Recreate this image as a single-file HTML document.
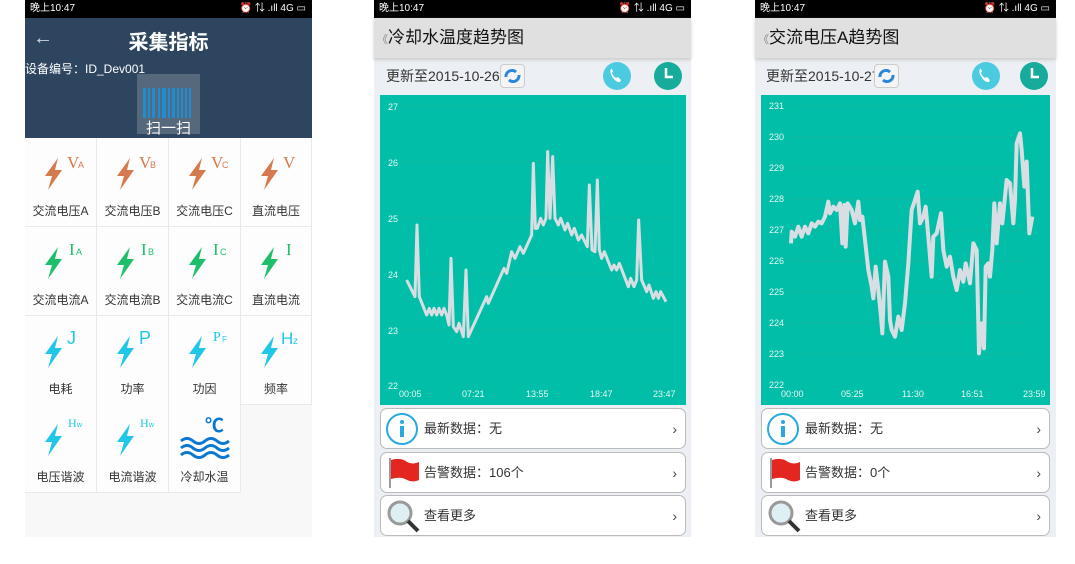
<!DOCTYPE html>
<html><head><meta charset="utf-8"><style>
*{margin:0;padding:0;box-sizing:border-box}
body{width:1075px;height:564px;background:#fff;position:relative;overflow:hidden;font-family:"Liberation Sans","Noto Sans CJK SC",sans-serif}
.abs{position:absolute}
.sb{position:absolute;top:0;height:18px;background:#000;color:#fff;font-size:10px;line-height:18px;padding-left:5px}
.sb span{position:absolute;right:6px;top:0}
.cell{position:absolute;width:72px;height:89px;border-right:1px solid #e6e9ee;border-bottom:1px solid #e6e9ee;background:#fdfdfd}
.cell .t{position:absolute;left:0;right:0;top:64px;text-align:center;font-size:12px;color:#333}
.cell svg{position:absolute;left:0;top:0}
.tb{position:absolute;top:18px;height:40px;background:#e0e0e0;font-size:17px;color:#111;line-height:40px;box-shadow:0 2px 3px #ccc;padding-left:3px}
.upd{position:absolute;top:64px;font-size:14px;color:#333;line-height:24px}
.card{position:absolute;height:41px;background:#fff;border:1px solid #bbb;border-radius:7px;font-size:13px;color:#333;line-height:40px}
.card .tx{position:absolute;left:43px}
.card .ar{position:absolute;right:8px;top:0;font-size:14px;color:#444}
</style></head><body>

<!-- Phone 1 -->
<div class="abs" style="left:25px;top:0;width:287px;height:537px;background:#f8f8f8"></div>
<div class="sb" style="left:25px;width:287px">晚上10:47<span>⏰ ⇅ .ıll 4G ▭</span></div>
<div class="abs" style="left:25px;top:18px;width:287px;height:120px;background:#2e4560"></div>
<div class="abs" style="left:33px;top:27px;color:#cfd6de;font-size:20px">←</div>
<div class="abs" style="left:25px;top:26px;width:287px;text-align:center;color:#fff;font-size:20px;font-weight:bold">采集指标</div>
<div class="abs" style="left:25px;top:60px;color:#fff;font-size:12px">设备编号：ID_Dev001</div>
<div class="abs" style="left:137px;top:74px;width:63px;height:60px;background:#56687c"></div>
<svg class="abs" style="left:141px;top:88px" width="54" height="32">
<g fill="#1c8ed4"><rect x="2" y="0" width="3" height="30"/><rect x="7" y="0" width="2" height="30"/><rect x="11" y="0" width="3" height="30"/><rect x="17" y="0" width="2" height="30"/><rect x="21" y="0" width="4" height="30"/><rect x="27" y="0" width="2" height="30"/><rect x="31" y="0" width="3" height="30"/><rect x="36" y="0" width="2" height="30"/><rect x="40" y="0" width="2" height="30"/><rect x="44" y="0" width="2" height="30"/><rect x="48" y="0" width="2" height="30"/></g></svg>
<div class="abs" style="left:137px;top:117px;width:63px;text-align:center;color:#fff;font-size:15px">扫一扫</div>

<div class="cell" style="left:25px;top:138px"><svg width="72" height="60"><path d="M33,20 L20,38 L27,38 L23,52 L37,32 L30,32 Z" fill="#d47a4e"/><text x="42" y="30" fill="#d47a4e" font-size="17" font-family="Liberation Serif">V</text><text x="53" y="30" fill="#d47a4e" font-size="9">A</text></svg><div class="t">交流电压A</div></div>
<div class="cell" style="left:97px;top:138px"><svg width="72" height="60"><path d="M33,20 L20,38 L27,38 L23,52 L37,32 L30,32 Z" fill="#d47a4e"/><text x="42" y="30" fill="#d47a4e" font-size="17" font-family="Liberation Serif">V</text><text x="53" y="30" fill="#d47a4e" font-size="9">B</text></svg><div class="t">交流电压B</div></div>
<div class="cell" style="left:169px;top:138px"><svg width="72" height="60"><path d="M33,20 L20,38 L27,38 L23,52 L37,32 L30,32 Z" fill="#d47a4e"/><text x="42" y="30" fill="#d47a4e" font-size="17" font-family="Liberation Serif">V</text><text x="53" y="30" fill="#d47a4e" font-size="9">C</text></svg><div class="t">交流电压C</div></div>
<div class="cell" style="left:241px;top:138px;width:71px"><svg width="72" height="60"><path d="M33,20 L20,38 L27,38 L23,52 L37,32 L30,32 Z" fill="#d47a4e"/><text x="42" y="30" fill="#d47a4e" font-size="17" font-family="Liberation Serif">V</text></svg><div class="t">直流电压</div></div>

<div class="cell" style="left:25px;top:227px"><svg width="72" height="60"><path d="M33,20 L20,38 L27,38 L23,52 L37,32 L30,32 Z" fill="#1dbf6a"/><text x="44" y="28" fill="#1dbf6a" font-size="17" font-family="Liberation Serif">I</text><text x="51" y="28" fill="#1dbf6a" font-size="9">A</text></svg><div class="t">交流电流A</div></div>
<div class="cell" style="left:97px;top:227px"><svg width="72" height="60"><path d="M33,20 L20,38 L27,38 L23,52 L37,32 L30,32 Z" fill="#1dbf6a"/><text x="44" y="28" fill="#1dbf6a" font-size="17" font-family="Liberation Serif">I</text><text x="51" y="28" fill="#1dbf6a" font-size="9">B</text></svg><div class="t">交流电流B</div></div>
<div class="cell" style="left:169px;top:227px"><svg width="72" height="60"><path d="M33,20 L20,38 L27,38 L23,52 L37,32 L30,32 Z" fill="#1dbf6a"/><text x="44" y="28" fill="#1dbf6a" font-size="17" font-family="Liberation Serif">I</text><text x="51" y="28" fill="#1dbf6a" font-size="9">C</text></svg><div class="t">交流电流C</div></div>
<div class="cell" style="left:241px;top:227px;width:71px"><svg width="72" height="60"><path d="M33,20 L20,38 L27,38 L23,52 L37,32 L30,32 Z" fill="#1dbf6a"/><text x="45" y="28" fill="#1dbf6a" font-size="17" font-family="Liberation Serif">I</text></svg><div class="t">直流电流</div></div>

<div class="cell" style="left:25px;top:316px"><svg width="72" height="60"><path d="M33,20 L20,38 L27,38 L23,52 L37,32 L30,32 Z" fill="#1ec8e6"/><text x="42" y="28" fill="#1ec8e6" font-size="18">J</text></svg><div class="t">电耗</div></div>
<div class="cell" style="left:97px;top:316px"><svg width="72" height="60"><path d="M33,20 L20,38 L27,38 L23,52 L37,32 L30,32 Z" fill="#1ec8e6"/><text x="42" y="28" fill="#1ec8e6" font-size="18">P</text></svg><div class="t">功率</div></div>
<div class="cell" style="left:169px;top:316px"><svg width="72" height="60"><path d="M33,20 L20,38 L27,38 L23,52 L37,32 L30,32 Z" fill="#1ec8e6"/><text x="44" y="25" fill="#1ec8e6" font-size="14" font-family="Liberation Serif">P</text><text x="53" y="26" fill="#1ec8e6" font-size="8">F</text></svg><div class="t">功因</div></div>
<div class="cell" style="left:241px;top:316px;width:71px"><svg width="72" height="60"><path d="M33,20 L20,38 L27,38 L23,52 L37,32 L30,32 Z" fill="#1ec8e6"/><text x="40" y="28" fill="#1ec8e6" font-size="17">H</text><text x="52" y="28" fill="#1ec8e6" font-size="10">z</text></svg><div class="t">频率</div></div>

<div class="cell" style="left:25px;top:404px"><svg width="72" height="60"><path d="M33,20 L20,38 L27,38 L23,52 L37,32 L30,32 Z" fill="#1ec8e6"/><text x="43" y="23" fill="#1ec8e6" font-size="12" font-family="Liberation Serif">H</text><text x="52" y="23" fill="#1ec8e6" font-size="7">w</text></svg><div class="t">电压谐波</div></div>
<div class="cell" style="left:97px;top:404px"><svg width="72" height="60"><path d="M33,20 L20,38 L27,38 L23,52 L37,32 L30,32 Z" fill="#1ec8e6"/><text x="43" y="23" fill="#1ec8e6" font-size="12" font-family="Liberation Serif">H</text><text x="52" y="23" fill="#1ec8e6" font-size="7">w</text></svg><div class="t">电流谐波</div></div>
<div class="cell" style="left:169px;top:404px"><svg width="72" height="60"><text x="36" y="28" fill="#0a78d0" font-size="19" font-weight="bold">℃</text><g fill="none" stroke="#0a78d0" stroke-width="3"><path d="M12,37 q6,-5 12,0 t12,0 t12,0 t12,0"/><path d="M12,44 q6,-5 12,0 t12,0 t12,0 t12,0"/><path d="M12,51 q6,-5 12,0 t12,0 t12,0 t12,0"/></g></svg><div class="t">冷却水温</div></div>

<!-- Phone 2 -->
<div class="abs" style="left:374px;top:18px;width:317px;height:519px;background:#eceff3"></div>
<div class="sb" style="left:374px;width:317px">晚上10:47<span>⏰ ⇅ .ıll 4G ▭</span></div>
<div class="tb" style="left:374px;width:317px"><span style="color:#888;font-size:11px">《</span>冷却水温度趋势图</div>
<div class="upd" style="left:386px">更新至2015-10-26</div>
<div class="abs" style="left:500px;top:64px;width:25px;height:24px;background:#f4f4f4;border:1px solid #ccc;border-radius:4px"><svg width="23" height="22"><path d="M5,12 a6,6 0 0 1 10,-5" fill="none" stroke="#2b86d8" stroke-width="3"/><path d="M18,10 a6,6 0 0 1 -10,5" fill="none" stroke="#2b86d8" stroke-width="3"/></svg></div>
<svg class="abs" style="left:600px;top:60px" width="90" height="32"><circle cx="17" cy="16" r="14" fill="#4ccbe0"/><path d="M11,9 q-2,3 2,9 q4,5 7,4 l1,-2 l-3,-3 l-2,1 q-3,-2 -4,-5 l1,-2 l-2,-3z" fill="#fff"/><circle cx="68" cy="16" r="14" fill="#17ab9c"/><path d="M66,8 v9 h7" stroke="#fff" stroke-width="2.5" fill="none"/></svg>
<div class="abs" style="left:380px;top:95px;width:306px;height:310px;background:#00bea7"></div>
<svg class="abs" style="left:380px;top:95px" width="306" height="310" font-size="9" fill="#e8f6f3">
<g stroke="#12b59f" stroke-width="1"><line x1="22" y1="11" x2="290" y2="11"/><line x1="22" y1="67" x2="290" y2="67"/><line x1="22" y1="123" x2="290" y2="123"/><line x1="22" y1="179" x2="290" y2="179"/><line x1="22" y1="235" x2="290" y2="235"/></g>
<text x="8" y="15">27</text><text x="8" y="71">26</text><text x="8" y="127">25</text><text x="8" y="183">24</text><text x="8" y="239">23</text><text x="8" y="294">22</text>
<text x="19" y="302">00:05</text><text x="82" y="302">07:21</text><text x="146" y="302">13:55</text><text x="210" y="302">18:47</text><text x="273" y="302">23:47</text>
</svg>
<svg class="abs" style="left:0;top:0" width="1075" height="564"><g transform="translate(380,140) scale(0.33333)"><polyline fill="none" stroke="#d9dee4" stroke-width="9" stroke-linejoin="round" points="80,420 105,470 111,255 118,470 140,525 148,505 155,525 162,505 170,525 177,505 185,525 192,505 200,525 207,555 213,355 220,560 230,575 237,550 250,590 258,390 265,590 320,470 325,490 372,385 380,400 395,335 405,355 420,320 430,340 455,285 460,70 466,265 472,265 482,235 490,255 498,235 503,35 510,235 518,50 525,235 535,255 542,235 555,270 563,250 575,285 583,265 595,300 605,285 622,320 628,135 636,330 645,335 652,120 658,330 665,355 673,335 695,390 702,375 710,390 718,370 745,440 752,415 762,440 770,420 776,240 785,420 800,455 807,435 820,475 828,455 835,475 842,455 858,485"/></g>
<g transform="translate(755,90) scale(0.33333)"><polyline fill="none" stroke="#d9dee4" stroke-width="12" stroke-linejoin="round" points="108,460 110,425 120,440 130,410 140,440 150,410 160,430 170,400 180,410 190,395 200,400 210,380 220,335 225,370 235,350 245,360 255,340 262,460 268,345 272,470 278,340 290,360 300,400 310,335 315,390 322,380 330,450 340,540 350,590 355,625 362,530 370,600 378,680 382,730 390,515 400,560 405,690 410,720 420,740 430,680 440,720 450,640 460,520 470,360 480,330 488,305 495,400 505,380 512,350 520,440 530,560 535,440 545,430 558,370 565,480 575,530 585,500 595,560 605,600 615,540 625,575 632,520 645,580 655,460 665,480 672,790 680,700 687,775 692,530 700,520 705,560 712,480 718,340 725,460 735,340 742,400 755,270 765,280 775,400 780,330 785,160 795,130 800,180 808,290 815,215 823,430 832,380"/></g></svg>
<div class="card" style="left:380px;top:408px;width:306px"><svg class="abs" style="left:4px;top:3px" width="34" height="34"><circle cx="17" cy="17" r="15" fill="#fff" stroke="#29a9e0" stroke-width="2"/><circle cx="17" cy="10" r="2" fill="#29a9e0"/><rect x="15" y="14" width="4" height="11" fill="#29a9e0"/></svg><span class="tx">最新数据：无</span><span class="ar">›</span></div>
<div class="card" style="left:380px;top:452px;width:306px"><svg class="abs" style="left:6px;top:3px" width="34" height="34"><rect x="2" y="2" width="2" height="30" fill="#999"/><path d="M4,4 q10,-3 16,2 q6,3 12,0 v18 q-6,3 -12,0 q-6,-4 -16,-1z" fill="#e3261f"/></svg><span class="tx">告警数据：106个</span><span class="ar">›</span></div>
<div class="card" style="left:380px;top:495px;width:306px"><svg class="abs" style="left:5px;top:3px" width="34" height="34"><circle cx="14" cy="14" r="11" fill="#dff0f5" stroke="#999" stroke-width="3"/><path d="M22,22 l10,10" stroke="#333" stroke-width="4"/></svg><span class="tx">查看更多</span><span class="ar">›</span></div>

<!-- Phone 3 -->
<div class="abs" style="left:755px;top:18px;width:301px;height:519px;background:#eceff3;z-index:-1"></div>
<div class="sb" style="left:755px;width:301px">晚上10:47<span>⏰ ⇅ .ıll 4G ▭</span></div>
<div class="tb" style="left:755px;width:301px"><span style="color:#888;font-size:11px">《</span>交流电压A趋势图</div>
<div class="upd" style="left:766px">更新至2015-10-27</div>
<div class="abs" style="left:874px;top:64px;width:25px;height:24px;background:#f4f4f4;border:1px solid #ccc;border-radius:4px"><svg width="23" height="22"><path d="M5,12 a6,6 0 0 1 10,-5" fill="none" stroke="#2b86d8" stroke-width="3"/><path d="M18,10 a6,6 0 0 1 -10,5" fill="none" stroke="#2b86d8" stroke-width="3"/></svg></div>
<svg class="abs" style="left:970px;top:60px" width="90" height="32"><circle cx="16" cy="16" r="14" fill="#4ccbe0"/><path d="M10,9 q-2,3 2,9 q4,5 7,4 l1,-2 l-3,-3 l-2,1 q-3,-2 -4,-5 l1,-2 l-2,-3z" fill="#fff"/><circle cx="64" cy="16" r="14" fill="#17ab9c"/><path d="M62,8 v9 h7" stroke="#fff" stroke-width="2.5" fill="none"/></svg>
<div class="abs" style="left:761px;top:95px;width:289px;height:310px;background:#00bea7;z-index:-1"></div>
<svg class="abs" style="left:761px;top:95px;z-index:-1" width="289" height="310" font-size="9" fill="#e8f6f3">
<g stroke="#12b59f"><line x1="28" y1="11" x2="265" y2="11"/><line x1="28" y1="42" x2="265" y2="42"/><line x1="28" y1="73" x2="265" y2="73"/><line x1="28" y1="104" x2="265" y2="104"/><line x1="28" y1="135" x2="265" y2="135"/><line x1="28" y1="166" x2="265" y2="166"/><line x1="28" y1="197" x2="265" y2="197"/><line x1="28" y1="228" x2="265" y2="228"/><line x1="28" y1="259" x2="265" y2="259"/></g>
<text x="8" y="14">231</text><text x="8" y="45">230</text><text x="8" y="76">229</text><text x="8" y="107">228</text><text x="8" y="138">227</text><text x="8" y="169">226</text><text x="8" y="200">225</text><text x="8" y="231">224</text><text x="8" y="262">223</text><text x="8" y="293">222</text>
<text x="20" y="302">00:00</text><text x="80" y="302">05:25</text><text x="141" y="302">11:30</text><text x="200" y="302">16:51</text><text x="262" y="302">23:59</text>
</svg>
<div class="card" style="left:761px;top:408px;width:289px"><svg class="abs" style="left:4px;top:3px" width="34" height="34"><circle cx="17" cy="17" r="15" fill="#fff" stroke="#29a9e0" stroke-width="2"/><circle cx="17" cy="10" r="2" fill="#29a9e0"/><rect x="15" y="14" width="4" height="11" fill="#29a9e0"/></svg><span class="tx">最新数据：无</span><span class="ar">›</span></div>
<div class="card" style="left:761px;top:452px;width:289px"><svg class="abs" style="left:6px;top:3px" width="34" height="34"><rect x="2" y="2" width="2" height="30" fill="#999"/><path d="M4,4 q10,-3 16,2 q6,3 12,0 v18 q-6,3 -12,0 q-6,-4 -16,-1z" fill="#e3261f"/></svg><span class="tx">告警数据：0个</span><span class="ar">›</span></div>
<div class="card" style="left:761px;top:495px;width:289px"><svg class="abs" style="left:5px;top:3px" width="34" height="34"><circle cx="14" cy="14" r="11" fill="#dff0f5" stroke="#999" stroke-width="3"/><path d="M22,22 l10,10" stroke="#333" stroke-width="4"/></svg><span class="tx">查看更多</span><span class="ar">›</span></div>
</body></html>
